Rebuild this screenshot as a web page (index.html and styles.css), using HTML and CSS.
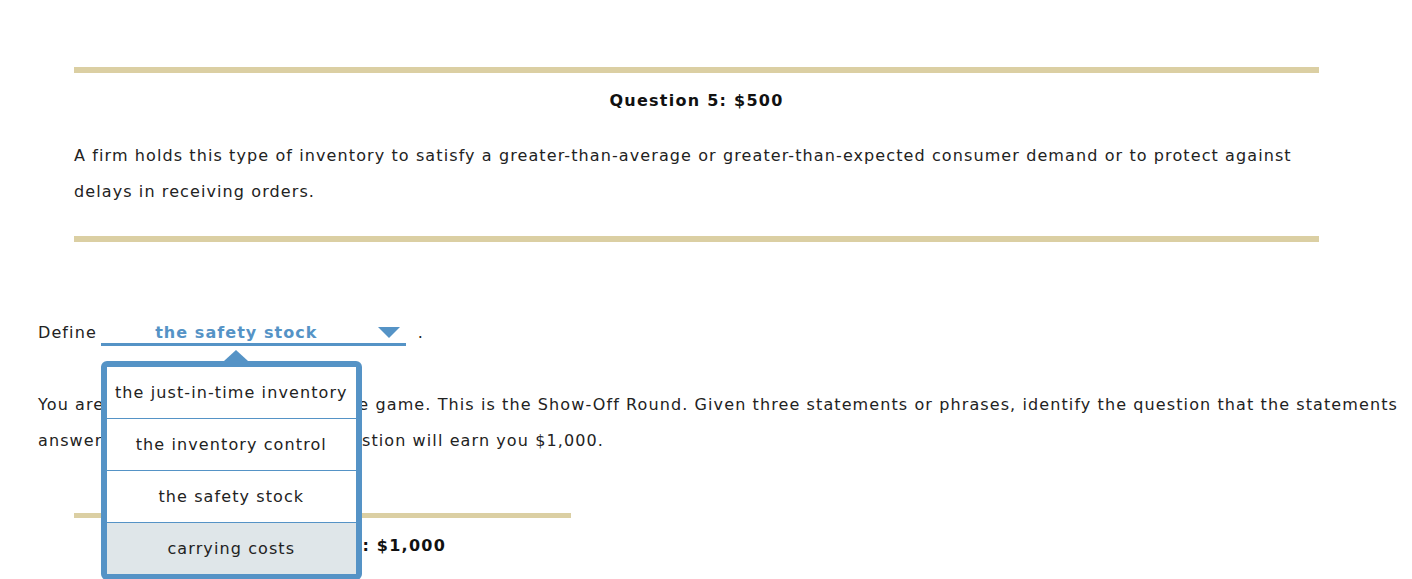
FILE: index.html
```html
<!DOCTYPE html>
<html>
<head>
<meta charset="utf-8">
<link rel="stylesheet" href="styles.css">
</head>
<body>
<div class="page">
  <section class="card card-wide">
    <h2 class="q-title">Question 5: $500</h2>
    <p class="q-text">A firm holds this type of inventory to satisfy a greater-than-average or greater-than-expected consumer demand or to protect against delays in receiving orders.</p>
  </section>

  <div class="define-row">
    <span class="define-label">Define</span>
    <span class="dropdown">
      <span class="dropdown-value">the safety stock</span>
      <span class="dropdown-arrow"></span>
      <div class="popup">
        <span class="popup-caret"></span>
        <ul class="options">
          <li class="option">the just-in-time inventory</li>
          <li class="option">the inventory control</li>
          <li class="option">the safety stock</li>
          <li class="option option-hover">carrying costs</li>
        </ul>
      </div>
    </span>
    <span class="period">.</span>
  </div>

  <p class="intro">You are now in the final round of the game. This is the Show-Off Round. Given three statements or phrases, identify the question that the statements answer. Properly answering the question will earn you $1,000.</p>

  <section class="card card-narrow">
    <h2 class="q-title">Show-Off Round: $1,000</h2>
  </section>
</div>
</body>
</html>
```

FILE: styles.css
```css
html {
  overflow: hidden;
  height: 100%;
}

html, body {
  margin: 0;
  padding: 0;
  background: #ffffff;
}

body {
  min-height: 100%;
  font-family: "DejaVu Sans", Verdana, sans-serif;
  font-size: 16px;
  letter-spacing: 1.1px;
  color: #222222;
}

.page {
  padding: 67px 8px 0 38px;
}

.card {
  border-top: 6px solid #dbcfa3;
  margin-left: 36px;
}

.card-wide {
  width: 1245px;
  border-bottom: 6px solid #dbcfa3;
  padding-bottom: 26px;
}

.card-narrow {
  width: 497px;
  margin-top: 54px;
  border-top-width: 5px;
}

.q-title {
  margin: 18px 0 0;
  font-size: 16px;
  line-height: 20px;
  font-weight: bold;
  letter-spacing: 1.25px;
  text-align: center;
  color: #111111;
}

.q-text {
  margin: 27px 0 0;
  line-height: 36px;
}

.define-row {
  margin-top: 73px;
  height: 36px;
  line-height: 36px;
  display: flex;
  align-items: flex-start;
}

.define-label {
  margin-right: 4px;
}

.dropdown {
  position: relative;
  display: inline-block;
  width: 305px;
  height: 28px;
  border-bottom: 3px solid #5593c6;
  line-height: 36px;
}

.dropdown-value {
  display: block;
  padding-right: 34px;
  text-align: center;
  font-weight: bold;
  letter-spacing: 1.05px;
  color: #5593c6;
}

.dropdown-arrow {
  position: absolute;
  right: 6px;
  top: 12px;
  width: 0;
  height: 0;
  border-left: 11px solid transparent;
  border-right: 11px solid transparent;
  border-top: 11px solid #5593c6;
}

.period {
  margin-left: 12px;
}

.popup {
  position: absolute;
  left: 0;
  top: 46px;
  width: 249px;
  border: 6px solid #5593c6;
  border-radius: 6px;
  background: #ffffff;
  z-index: 5;
}

.popup-caret {
  position: absolute;
  left: 117px;
  top: -17px;
  width: 0;
  height: 0;
  border-left: 12px solid transparent;
  border-right: 12px solid transparent;
  border-bottom: 11px solid #5593c6;
}

.options {
  list-style: none;
  margin: 0;
  padding: 0;
}

.option {
  height: 51px;
  line-height: 51px;
  text-align: center;
  white-space: nowrap;
  border-bottom: 1px solid #5593c6;
  color: #222222;
}

.option:last-child {
  border-bottom: none;
}

.option-hover {
  background: #dfe6e9;
}

.intro {
  margin: 36px 0 0;
  line-height: 36px;
}
```
